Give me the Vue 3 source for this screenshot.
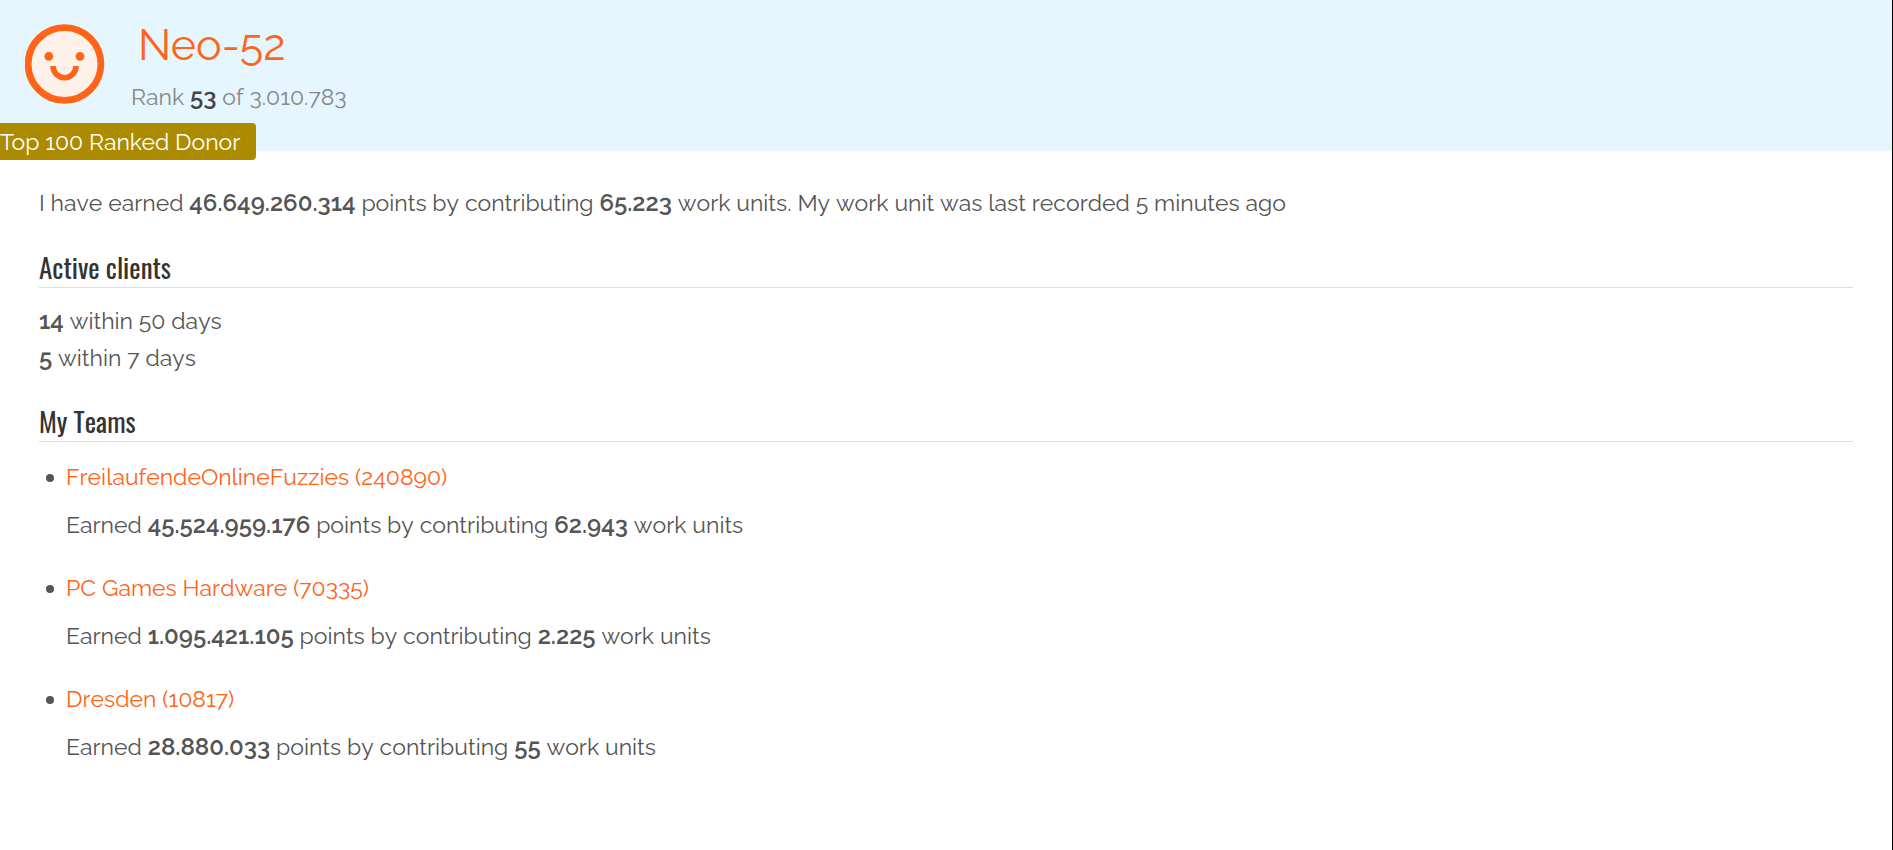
<script setup>
const donor = { name: 'Neo-52', rank: '53', total: '3.010.783', score: '46.649.260.314', units: '65.223' }

const clients = [
  { count: '14', days: 50 },
  { count: '5', days: 7 },
]

const teams = [
  { name: 'FreilaufendeOnlineFuzzies', id: 240890, score: '45.524.959.176', units: '62.943' },
  { name: 'PC Games Hardware', id: 70335, score: '1.095.421.105', units: '2.225' },
  { name: 'Dresden', id: 10817, score: '28.880.033', units: '55' },
]
</script>

<template>
  <div class="page">
    <header class="banner">
      <svg class="avatar" viewBox="0 0 80 80" aria-hidden="true">
        <circle cx="39.5" cy="40" r="36.4" fill="#fef1ea" stroke="#ff6418" stroke-width="6.8" />
        <circle cx="23.8" cy="32.3" r="4.4" fill="#ff6418" />
        <circle cx="55" cy="32.3" r="4.4" fill="#ff6418" />
        <path d="M28 42a11.5 11.7 0 0 0 23 0" fill="none" stroke="#ff6418" stroke-width="5.6" />
      </svg>
      <div class="identity">
        <h1>{{ donor.name }}</h1>
        <p class="rank">Rank <strong>{{ donor.rank }}</strong> of {{ donor.total }}</p>
      </div>
      <span class="badge">Top 100 Ranked Donor</span>
    </header>

    <main class="content">
      <p class="intro">
        I have earned <strong>{{ donor.score }}</strong> points by contributing
        <strong>{{ donor.units }}</strong> work units. My work unit was last recorded 5 minutes ago
      </p>

      <section>
        <h2>Active clients</h2>
        <p v-for="c in clients" :key="c.days"><strong>{{ c.count }}</strong> within {{ c.days }} days</p>
      </section>

      <section>
        <h2>My Teams</h2>
        <ul>
          <li v-for="t in teams" :key="t.id">
            <a href="#">{{ t.name }} ({{ t.id }})</a>
            <p>
              Earned <strong>{{ t.score }}</strong> points by contributing
              <strong>{{ t.units }}</strong> work units
            </p>
          </li>
        </ul>
      </section>
    </main>
  </div>
</template>

<style>
body {
  margin: 0;
  background: #fff;
}
</style>

<style scoped>
.page {
  box-sizing: border-box;
  min-height: 100vh;
  border-right: 1px solid #000;
  color: #555;
  font-family: Raleway, Lato, sans-serif;
  font-size: 23px;
  font-kerning: none;
  line-height: 37px;
}

p,
h1,
h2,
ul {
  margin: 0;
}

strong {
  font-size: 24px;
  font-weight: 600;
  line-height: 24px;
}

.banner {
  position: relative;
  display: flex;
  gap: 26px;
  box-sizing: border-box;
  min-height: 151px;
  padding: 24px 25px 0;
  background: #e5f6fe;
}

.avatar {
  flex: none;
  width: 80px;
  height: 80px;
}

h1 {
  padding-left: 7px;
  color: #ff6418;
  font-size: 43px;
  font-weight: 400;
  font-kerning: normal;
  line-height: 42px;
}

.rank {
  margin-top: 12px;
  color: #888;
}

.rank strong {
  color: #444;
}

.badge {
  position: absolute;
  left: 0;
  top: 123px;
  padding-right: 16px;
  border-radius: 0 4px 4px 0;
  background: #ac8b00;
  color: #fff;
  font-kerning: normal;
}

.content {
  padding: 33px 39px;
}

.intro {
  margin-bottom: 28px;
}

section {
  margin-bottom: 27px;
}

h2 {
  margin-bottom: 14px;
  padding-bottom: 2px;
  border-bottom: 1px solid #ddd;
  color: #333;
  font-family: Oswald, "Liberation Sans Narrow", sans-serif;
  font-size: 27px;
  font-weight: 400;
  line-height: 36px;
}

ul {
  padding: 2px 0 0;
  list-style: none;
}

li {
  position: relative;
  margin-bottom: 26px;
  padding-left: 27px;
}

li::before {
  content: "";
  position: absolute;
  left: 7px;
  top: 16px;
  width: 8px;
  height: 8px;
  border-radius: 50%;
  background: #555;
}

li p {
  margin-top: 11px;
}

a {
  display: block;
  width: fit-content;
  color: #ff6418;
  text-decoration: none;
}
</style>
